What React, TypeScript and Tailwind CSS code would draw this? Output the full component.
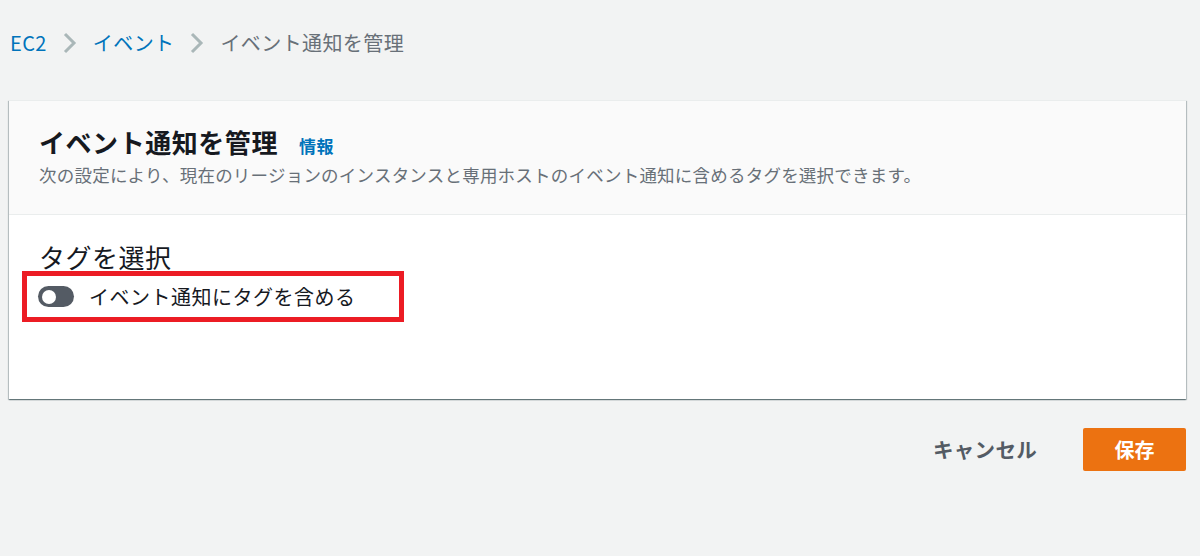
import React from "react";

const Chevron = () => (
  <svg width="16" height="24" viewBox="0 0 16 24" className="mx-[15px] shrink-0">
    <polyline points="3,3 12,12 3,21" fill="none" stroke="#aab7b8" strokeWidth="3" />
  </svg>
);

export default function App() {
  const font = { fontFamily: '"Noto Sans CJK JP", "Noto Sans", sans-serif' };
  return (
    <div className="w-[1200px] h-[556px] bg-[#f2f3f3] overflow-hidden" style={font}>
      <div className="flex items-center h-[30px] mt-[28px] pl-[10px] text-[20px] leading-[30px] tracking-[0.4px]">
        <span className="text-[#0073bb]">EC2</span>
        <Chevron />
        <span className="text-[#0073bb]">イベント</span>
        <Chevron />
        <span className="text-[#687078]">イベント通知を管理</span>
      </div>
      <div className="ml-[9px] mt-[42px] w-[1177px] bg-white shadow-[0_1px_1px_0_rgba(0,28,36,0.35),1px_1px_1px_0_rgba(0,28,36,0.2),-1px_1px_1px_0_rgba(0,28,36,0.2)] border-t border-[#eaeded]">
        <div className="bg-[#fafafa] border-b border-[#eaeded] px-[30px] pt-[25px] pb-[27px]">
          <div className="flex items-baseline h-[32px] leading-[32px]">
            <span className="text-[26px] font-bold text-[#16191f] tracking-[0.55px]">イベント通知を管理</span>
            <span className="ml-[21px] text-[17px] font-bold text-[#0073bb] tracking-[0.5px]">情報</span>
          </div>
          <div className="mt-[5px] text-[17.5px] leading-[24px] text-[#687078] tracking-[0.22px]">
            次の設定により、現在のリージョンのインスタンスと専用ホストのイベント通知に含めるタグを選択できます。
          </div>
        </div>
        <div className="pl-[30px] pt-[26px] h-[184px]">
          <div className="text-[26px] leading-[32px] text-[#16191f] tracking-[0.5px]">タグを選択</div>
          <div className="-ml-[17px] -mt-[2px] flex items-center w-[382px] h-[51px] border-[5px] border-[#ec1c24] pl-[11px]">
            <div className="relative w-[36px] h-[21px] rounded-full bg-[#545b64] shrink-0">
              <div className="absolute left-[4px] top-[3.5px] w-[14px] h-[14px] rounded-full bg-white" />
            </div>
            <span className="ml-[15px] text-[20px] leading-[28px] text-[#16191f] tracking-[0.5px]">イベント通知にタグを含める</span>
          </div>
        </div>
      </div>
      <div className="flex items-center justify-end mt-[29px] pr-[14px]">
        <span className="text-[20.5px] font-bold text-[#545b64] leading-[43px] tracking-[0.3px]">キャンセル</span>
        <button className="ml-[46px] w-[103px] h-[43px] rounded-[2px] bg-[#ec7211] text-white text-[20px] font-bold">
          保存
        </button>
      </div>
    </div>
  );
}
